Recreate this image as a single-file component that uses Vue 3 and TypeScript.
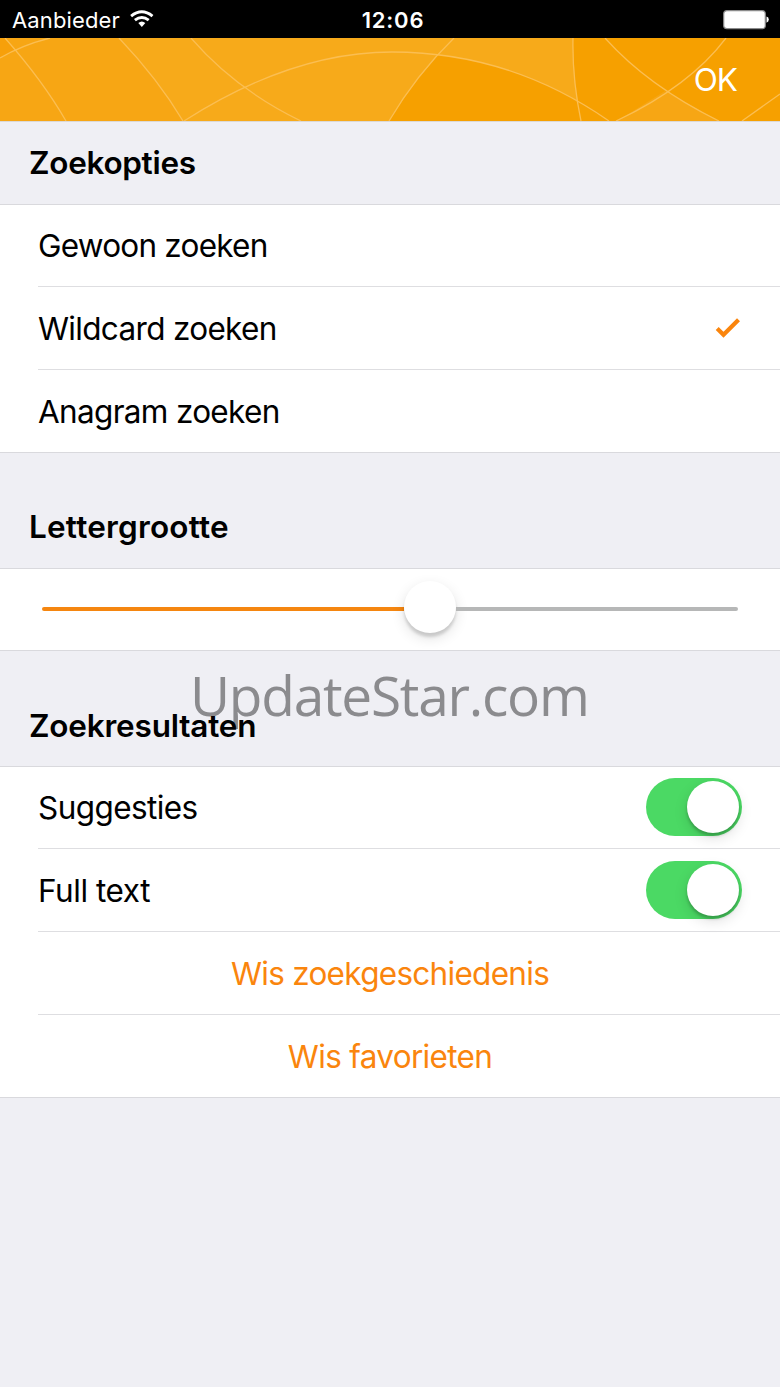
<script setup lang="ts">
import { ref } from 'vue'

interface SearchOption {
  id: string
  label: string
}

const searchOptions: SearchOption[] = [
  { id: 'plain', label: 'Gewoon zoeken' },
  { id: 'wildcard', label: 'Wildcard zoeken' },
  { id: 'anagram', label: 'Anagram zoeken' },
]
const selected = ref('wildcard')
const suggestions = ref(true)
const fullText = ref(true)
</script>

<template>
  <div class="screen">
    <header class="status">
      <div class="carrier">
        <span class="carrier-name">Aanbieder</span>
        <svg class="wifi" width="24" height="18" viewBox="0 0 24 18">
          <g fill="none" stroke="#fff" stroke-width="2.9">
            <path d="M1.1 6.1Q11.8 -2.5 22.5 6.1" />
            <path d="M4.9 10.2Q11.8 4.6 18.7 10.2" />
          </g>
          <path d="M8.3 13.1Q11.8 10.1 15.3 13.1L11.8 16.9Z" fill="#fff" />
        </svg>
      </div>
      <span class="clock">12:06</span>
      <svg class="battery" width="46" height="20" viewBox="0 0 46 20">
        <rect x=".7" y=".7" width="41.6" height="18" rx="3.2" fill="#fff" stroke="#8b8b8b" stroke-width="1.2" />
        <path d="M43.5 6.5Q45.8 7.2 45.8 9.5T43.5 12.8Z" fill="#fff" />
      </svg>
    </header>

    <nav class="navbar">
      <svg class="pattern" width="780" height="83" viewBox="0 0 780 83">
        <rect width="780" height="83" fill="#f6a000" />
        <path d="M0 0H573Q573 40 581 83H0Z" fill="#f7aa1a" />
        <path d="M119 0H0V83H183Q158 41 119 0Z" fill="#f7a614" />
        <path d="M0 0H5L15 13L0 20Z" fill="#f7a00a" />
        <path d="M438 17Q411 48 389 83H609L578 63Q510 25 438 17Z" fill="#f6a000" />
        <path d="M665 53L617 83H719Z" fill="#f7a614" />
        <g fill="none" stroke="#fbbe52" stroke-width="1.3">
          <path d="M5 0Q43 43 66 83M0 20Q22 7 50 0M119 0Q158 41 183 83" />
          <path d="M191 0Q235 51 301 83M184 83Q292 14 392 14Q510 14 609 83" />
          <path d="M454 0Q416 37 389 83M573 0Q572 40 581 83M605 0Q648 48 719 83M726 0Q690 48 616 83M742 83L780 56" />
        </g>
      </svg>
      <button class="done">OK</button>
    </nav>

    <main>
      <h2 class="heading first"><span class="t-options">Zoekopties</span></h2>
      <ul class="list options">
        <li v-for="option in searchOptions" :key="option.id" class="row" @click="selected = option.id">
          <div class="cell">
            <span :class="`t-${option.id}`">{{ option.label }}</span>
            <svg v-if="selected === option.id" class="check" width="26" height="20" viewBox="0 0 26 20">
              <path d="M2.2 10.5L8.5 16.7L23.5 1.8" fill="none" stroke="#fa850d" stroke-width="4.2" />
            </svg>
          </div>
        </li>
      </ul>

      <h2 class="heading"><span class="t-size">Lettergrootte</span></h2>
      <div class="slider">
        <div class="track filled"></div>
        <div class="thumb"></div>
        <div class="track"></div>
      </div>

      <h2 class="heading"><span class="t-results">Zoekresultaten</span></h2>
      <ul class="list results">
        <li class="row">
          <div class="cell">
            <span class="t-suggest">Suggesties</span>
            <button class="switch" :class="{ on: suggestions }" @click="suggestions = !suggestions"><i class="knob"></i></button>
          </div>
        </li>
        <li class="row">
          <div class="cell">
            <span class="t-full">Full text</span>
            <button class="switch" :class="{ on: fullText }" @click="fullText = !fullText"><i class="knob"></i></button>
          </div>
        </li>
        <li class="row"><div class="cell action"><span class="t-history">Wis zoekgeschiedenis</span></div></li>
        <li class="row"><div class="cell action"><span class="t-fav">Wis favorieten</span></div></li>
      </ul>
    </main>
    <div class="watermark">UpdateStar.com</div>
  </div>
</template>

<style>
body {
  margin: 0;
  background: #efeff4;
}
</style>

<style scoped>
.screen {
  position: relative;
  width: 780px;
  height: 1387px;
  overflow: hidden;
  background: #efeff4;
  color: #000;
  font-family: Inter, 'Liberation Sans', sans-serif;
  font-size: 31.5px;
}
.status {
  display: grid;
  grid-template-columns: 1fr auto 1fr;
  align-items: center;
  height: 38px;
  padding: 0 11px 0 12px;
  box-sizing: border-box;
  background: #000;
  color: #fff;
  font-size: 22px;
}
.carrier {
  display: flex;
  align-items: center;
  gap: 10px;
}
.carrier-name {
  line-height: 38px;
  padding-top: 1px;
  letter-spacing: 0.12px;
}
.wifi {
  margin-top: -2px;
}
.clock {
  padding: 1px 0 0 5px;
  font-weight: 600;
  letter-spacing: 0.8px;
}
.battery {
  justify-self: end;
}
.navbar {
  position: relative;
  display: flex;
  align-items: center;
  justify-content: flex-end;
  height: 83px;
  padding-right: 43px;
  border-bottom: 1px solid #dcd9d6;
}
.pattern {
  position: absolute;
  inset: 0;
}
.done {
  position: relative;
  padding: 0;
  border: 0;
  background: none;
  color: #fff;
  font: inherit;
  letter-spacing: -1px;
}
.heading {
  display: flex;
  align-items: flex-end;
  box-sizing: border-box;
  height: 116px;
  margin: 0;
  padding: 0 29px 21px;
  border-bottom: 1px solid #d9d9dd;
  font-size: 31.5px;
  line-height: 40px;
  font-weight: 600;
}
.heading.first {
  height: 83px;
}
.heading span {
  position: relative;
  z-index: 1;
}
.list {
  margin: 0;
  padding: 0;
  list-style: none;
  background: #fff;
  border-bottom: 1px solid #d9d9dd;
}
.row {
  padding-left: 38px;
}
.cell {
  display: flex;
  align-items: center;
  justify-content: space-between;
  box-sizing: border-box;
  height: 83px;
  padding-right: 38px;
  border-bottom: 1px solid #dedee1;
}
.row:first-child .cell {
  height: 82px;
}
.row:last-child .cell {
  height: 82px;
  border-bottom: 0;
}
.t-options {
  letter-spacing: -0.3px;
}
.t-size {
  letter-spacing: 0.2px;
}
.t-results {
  margin-bottom: -1px;
  letter-spacing: -0.2px;
}
.t-plain {
  letter-spacing: -0.77px;
}
.t-wildcard,
.t-anagram,
.t-fav {
  letter-spacing: -0.68px;
}
.t-suggest {
  letter-spacing: -0.58px;
}
.t-full {
  letter-spacing: -0.45px;
}
.t-history {
  letter-spacing: -0.71px;
}
.results span {
  padding-top: 1px;
}
.results .t-suggest {
  padding-top: 0;
}
.action {
  justify-content: center;
  color: #fa850d;
}
.check {
  margin-right: 1px;
}
.slider {
  display: flex;
  align-items: center;
  box-sizing: border-box;
  height: 82px;
  padding: 0 42px 1px;
  background: #fff;
  border-bottom: 1px solid #d9d9dd;
}
.track {
  width: 282px;
  height: 4px;
  border-radius: 0 2px 2px 0;
  background: #b6b7b7;
}
.track.filled {
  width: 362px;
  border-radius: 2px 0 0 2px;
  background: #f58610;
}
.thumb {
  width: 52px;
  height: 52px;
  margin-bottom: 4px;
  border-radius: 50%;
  background: #fff;
  box-shadow: 0 4px 3px rgba(0, 0, 0, 0.14), 0 5px 14px rgba(0, 0, 0, 0.12);
}
.switch {
  display: flex;
  justify-content: flex-start;
  width: 96px;
  height: 58px;
  margin-top: -1px;
  padding: 3px;
  border: 0;
  border-radius: 29px;
  background: #e5e5ea;
}
.switch.on {
  justify-content: flex-end;
  background: #4bd964;
}
.knob {
  width: 52px;
  height: 52px;
  border-radius: 50%;
  background: #fff;
  box-shadow: 0 3px 3px rgba(0, 0, 0, 0.2), 0 5px 14px rgba(0, 0, 0, 0.13);
}
.watermark {
  position: absolute;
  top: 660px;
  left: 190px;
  font-family: 'Open Sans', 'Noto Sans', sans-serif;
  font-size: 55px;
  line-height: 70px;
  letter-spacing: -1.25px;
  color: #8b8b8e;
  white-space: nowrap;
  pointer-events: none;
}
</style>
